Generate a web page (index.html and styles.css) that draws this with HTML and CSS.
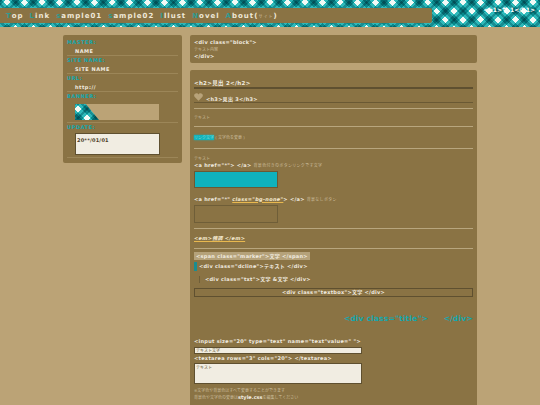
FILE: index.html
```html
<!DOCTYPE html>
<html lang="ja">
<head>
  <meta charset="UTF-8">
  <title>template</title>
  <link rel="stylesheet" href="styles.css">
</head>
<body>
  <header class="top">
    <nav class="nav">
      <a><b>T</b>op</a>
      <a><b>L</b>ink</a>
      <a><b>s</b>ample01</a>
      <a><b>s</b>ample02</a>
      <a><b>I</b>llust</a>
      <a><b>N</b>ovel</a>
      <a><b>A</b>bout(<span class="nav-jp">サイト</span>)</a>
    </nav>
    <h1 class="logo">&lt;h1&gt;サ 1&lt;/h1&gt;</h1>
  </header>

  <div class="wrap">
    <aside class="side">
      <div class="side-label">MASTER:</div>
      <div class="side-value">NAME</div>
      <div class="side-label">SITE NAME:</div>
      <div class="side-value">SITE NAME</div>
      <div class="side-label">URL:</div>
      <div class="side-value">http://</div>
      <div class="side-label">BANNER:</div>
      <div class="side-value banner-row"><div class="banner"><div class="banner-check"></div></div></div>
      <div class="side-label">UPDATE:</div>
      <div class="side-value area-row"><div class="update-box">20**/01/01</div></div>
    </aside>

    <main class="main">
      <section class="block">
        <p class="code">&lt;div class="block"&gt;</p>
        <p class="jp">テキスト内容</p>
        <p class="code">&lt;/div&gt;</p>
      </section>

      <section class="block article">
        <h2 class="h2">&lt;h2&gt;見出 2&lt;/h2&gt;</h2>
        <h3 class="h3">
          <svg class="heart" viewBox="0 0 12 10"><path d="M6 10 L1 5 C-1 2.500 1 0 3.300 0 C4.500 0 5.500 .7 6 1.600 C6.500 .7 7.500 0 8.700 0 C11 0 13 2.500 11 5 Z"/></svg>
          &lt;h3&gt;見出 3&lt;/h3&gt;
        </h3>
        <hr class="rule">
        <p class="jp">テキスト</p>
        <hr class="rule">
        <p class="jp link-row"><span class="glow">リンク文字</span> ( 文字色を変更 )</p>
        <hr class="rule">

        <p class="jp btn-head">テキスト</p>
        <p class="code">&lt;a href="*"&gt; &lt;/a&gt; <span class="jp">背景色付きのボタンリンクです文字</span></p>
        <div class="btn-fill"></div>
        <p class="code gap-a">&lt;a href="*" <em class="mark">class="bg-none"</em>&gt; &lt;/a&gt; <span class="jp">背景なしボタン</span></p>
        <div class="btn-none"></div>
        <hr class="rule">
        <p class="code em-row"><em class="mark">&lt;em&gt;強調 &lt;/em&gt;</em></p>
        <hr class="rule">

        <p class="code marker-row"><span class="marker">&lt;span class="marker"&gt;文字 &lt;/span&gt;</span></p>
        <div class="code dline">&lt;div class="dcline"&gt;テキスト &lt;/div&gt;</div>
        <div class="code txt">&lt;div class="txt"&gt;文字 &amp;文字 &lt;/div&gt;</div>
        <div class="code textbox">&lt;div class="textbox"&gt;文字 &lt;/div&gt;</div>
        <div class="code title">&lt;div class="title"&gt;　　&lt;/div&gt;</div>

        <p class="code">&lt;input size="20" type="text" name="text"value=" "&gt;</p>
        <div class="input">テキスト文字</div>
        <p class="code">&lt;textarea rows="3" cols="20"&gt; &lt;/textarea&gt;</p>
        <div class="textarea">テキスト</div>
        <p class="jp note">※文字色や背景色はすべて変更することができます</p>
        <p class="jp">背景色や文字色の変更は<span class="css">style.css</span>を編集してください</p>
      </section>
    </main>
  </div>
</body>
</html>
```
FILE: styles.css
```css
* {
  box-sizing: border-box;
}

body {
  margin: 0;
  height: 405px;
  overflow: hidden;
  background-color: #bba376;
  color: #f1ece0;
  font-family: "DejaVu Sans", "Noto Sans CJK JP", sans-serif;
  font-size: 5px;
  font-weight: bold;
}

p {
  margin: 0;
}

/* gingham */
.top,
.banner-check {
  background-color: #f2faf6;
  background-image:
    repeating-linear-gradient(45deg, #30bcc0 0 2.500px, #1a9098 2.500px 5px, #30bcc0 5px 7.500px, #fff 7.500px 12.400px),
    repeating-linear-gradient(-45deg, #30bcc0 0 2.500px, #1a9098 2.500px 5px, #30bcc0 5px 7.500px, #fff 7.500px 12.400px);
  background-blend-mode: multiply;
}

.top {
  display: flex;
  justify-content: space-between;
  height: 27px;
  padding-top: 8px;
}

.nav {
  display: flex;
  gap: 6px;
  width: 432px;
  height: 15px;
  padding-left: 6px;
  align-items: center;
  background: #8a7344;
  border-radius: 0 2px 2px 0;
  font-size: 7px;
  letter-spacing: 1px;
  color: #efe8d8;
}

.nav b {
  color: #2f9a92;
}

.nav-jp {
  font-size: 4px;
  font-weight: normal;
  color: #cbbd9c;
}

.logo {
  margin: 0;
  padding: 0 5px 0 0;
  font-size: 6px;
  line-height: 4px;
  color: #fff;
}

.wrap {
  display: flex;
  align-items: flex-start;
  gap: 8px;
  padding: 8px 0 0 63px;
}

.side {
  width: 119px;
  height: 128px;
  padding: 3px 4px 0;
  background: #8a7344;
  border-radius: 2px;
}

.side-label {
  height: 9px;
  line-height: 9px;
  color: #12a7ae;
  letter-spacing: .6px;
}

.side-value {
  height: 9px;
  padding-left: 8px;
  line-height: 8px;
  letter-spacing: .5px;
  border-bottom: 1px solid #9c8658;
}

.banner-row {
  height: 22px;
  padding-top: 3px;
}

.banner {
  width: 84px;
  height: 16px;
  background: #bba376;
}

.banner-check {
  width: 24px;
  height: 16px;
  clip-path: polygon(0 0, 45% 0, 100% 100%, 0 100%);
}

.area-row {
  height: 26px;
  padding-top: 1px;
}

.update-box {
  width: 85px;
  height: 22px;
  padding: 2px 1px;
  color: #4c4028;
  background: #f1ede2;
  border: 1px solid #5f5030;
  letter-spacing: .2px;
}

.main {
  width: 287px;
}

.block {
  margin-bottom: 7px;
  padding: 4px;
  background: #8a7344;
  border-radius: 2px;
}

.block:first-child {
  height: 28px;
}

.article {
  padding-top: 10px;
  min-height: 340px;
}

.code {
  height: 7px;
  line-height: 7px;
  letter-spacing: .3px;
}

.jp {
  line-height: 7px;
  font-size: 4px;
  font-weight: normal;
  color: #cbbd9c;
}

.h2 {
  margin: 0;
  height: 9px;
  line-height: 7px;
  font-size: 5.500px;
  letter-spacing: .3px;
  border-bottom: 2px solid #5f5030;
}

.h3 {
  display: flex;
  align-items: center;
  gap: 3px;
  height: 14px;
  margin: 0;
  padding-top: 5px;
  font-size: 5px;
  letter-spacing: .3px;
  border-bottom: 1px solid #6a5934;
}

.heart {
  width: 9px;
  height: 8px;
  margin-top: -2px;
  fill: #b8a37a;
}

.rule {
  margin: 5px 0;
  border: 0;
  border-top: 1px solid #b8a67e;
}

.link-row {
  margin: 7px 0;
}

.glow {
  background: #12b3bb;
  color: #7fd8d8;
  box-shadow: 0 0 2px #12b3bb;
}

.btn-head {
  margin-top: 6px;
}

.btn-fill {
  width: 84px;
  height: 17px;
  margin-top: 1.500px;
  background: #0fb2bd;
  border: 1px solid #6a5934;
}

.gap-a {
  margin-top: 8px;
}

.mark {
  color: #f5ead0;
  text-decoration: underline;
  text-decoration-color: #e8b84f;
}

.btn-none {
  width: 84px;
  height: 18px;
  margin-top: 2px;
  border: 1px solid #6f5e38;
}

.em-row {
  margin: 6px 0;
}

.marker-row {
  height: 8px;
  margin-top: -2px;
}

.marker {
  display: inline-block;
  padding: 0 2px;
  line-height: 8px;
  vertical-align: top;
  background: #b5a27a;
}

.dline {
  height: 9px;
  margin-top: 2px;
  padding-left: 2px;
  line-height: 9px;
  border-left: 3px solid #1a8d90;
}

.txt {
  margin: 5px 0 0 5px;
  padding-left: 5px;
  border-left: 1px solid #6f5e38;
}

.textbox {
  height: 9px;
  margin-top: 5.500px;
  text-align: center;
  border: 1px solid #5f5030;
}

.title {
  margin: 17.500px 0 16px;
  text-align: right;
  font-size: 7.500px;
  letter-spacing: .2px;
  color: #12a7ae;
}

.input {
  width: 168px;
  height: 7px;
  margin: 2.500px 0 1px;
  padding-left: 1px;
  line-height: 5px;
  font-size: 4px;
  font-weight: normal;
  color: #6a5934;
  background: #f1ede2;
  border: 1px solid #5f5030;
}

.textarea {
  width: 168px;
  height: 21px;
  margin: 1px 0 0;
  padding: 1px;
  line-height: 6px;
  font-size: 4px;
  font-weight: normal;
  color: #6a5934;
  background: #f1ede2;
  border: 1px solid #5f5030;
}

.note {
  margin-top: 3px;
}

.css {
  font-size: 5px;
  font-weight: bold;
  color: #f1ece0;
}
```
